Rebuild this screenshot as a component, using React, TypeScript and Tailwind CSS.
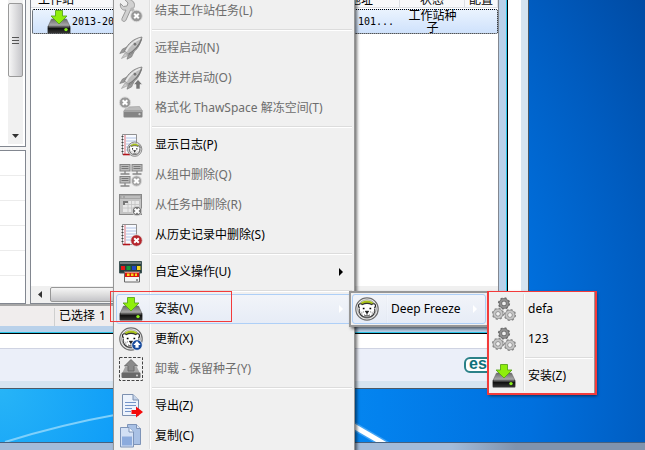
import React from 'react'
import { clsx } from 'clsx'

type IconProps = { muted?: boolean }

function Drive({ muted }: IconProps) {
  return (
    <svg viewBox="0 0 24 24" className="size-6">
      <defs>
        <linearGradient id="driveTop" x1="0" y1="0" x2="0" y2="1">
          <stop offset="0" stopColor="#6b6b6b" />
          <stop offset="1" stopColor="#b5b5b5" />
        </linearGradient>
        <linearGradient id="driveFront" x1="0" y1="0" x2="0" y2="1">
          <stop offset="0" stopColor="#555" />
          <stop offset="0.35" stopColor="#111" />
          <stop offset="1" stopColor="#3a3a3a" />
        </linearGradient>
      </defs>
      <path d="M4.500 9h15L23 16.500H1z" fill="url(#driveTop)" stroke="#666" strokeWidth="0.6" />
      <rect x="0.6" y="15.800" width="22.800" height="7.800" rx="1.200" fill="url(#driveFront)" />
      <path d="M2 16.800h20" stroke="#888" strokeWidth="0.7" />
      <circle cx="19" cy="19.600" r="1.700" fill={muted ? '#aaa' : '#8bf01c'} />
      <path d="M8.500.5h7v5.500h4.500L12 14 4 6h4.500z" fill={muted ? '#888' : '#8fee0c'} stroke={muted ? '#666' : '#5aa51b'} strokeWidth="0.9" />
    </svg>
  )
}

function CrossBadge({ x, y, fill, r = 5.2 }: { x: number; y: number; fill: string; r?: number }) {
  return (
    <g transform={`translate(${x} ${y})`}>
      <circle r={r} fill={fill} stroke="#ddd" strokeWidth="0.9" />
      <path d="m-2.300-2.300 4.600 4.600m0-4.600-4.600 4.600" stroke="#fff" strokeWidth="2" />
    </g>
  )
}

function Wrench() {
  return (
    <svg viewBox="0 0 24 24" className="size-6">
      <path d="M6 .8 9 4 8 7 4.500 7.500 1.500 4.500c-1 4 2 7.500 5.500 6.500L3 19.500c-1 3 3 4 4 1.500L11.500 11c4-1 5-5 3-8-2-2.500-5-3.500-8.500-2.200z" fill="#d0d0d0" stroke="#999" />
      <path d="m12 9 5 6" stroke="#b5b5b5" strokeWidth="3" />
      <CrossBadge x={17.5} y={17} fill="#989898" r={5.8} />
    </svg>
  )
}

function Rocket({ arrow }: { arrow?: boolean }) {
  return (
    <svg viewBox="0 0 24 24" className="size-6">
      <path d="M9 10.500 3.500 13 .800 17.500l5-1.500zM15 16l-2.500 5-4.500 2.200 1.500-5.200z" fill="#999" stroke="#777" strokeWidth="0.6" />
      <path d="M6 17 2.500 22.500 9 19.500z" fill="#c9c9c9" stroke="#999" strokeWidth="0.6" />
      <path d="M23 1C15 2.500 9 7 5.500 15l4 4C17 16 21.500 9 23 1z" fill="#bcbcbc" stroke="#828282" strokeWidth="0.9" />
      <path d="M21.500 2.500C15 5 10 9.500 7 15.500" stroke="#e8e8e8" strokeWidth="1.800" fill="none" />
      <path d="M22.500 3C20 10 15 15 9.500 18" stroke="#777" strokeWidth="1.200" fill="none" />
      <circle cx="16" cy="8.200" r="1.900" fill="#777" stroke="#e0e0e0" strokeWidth="0.6" />
      {arrow && <path d="m19 13.500 4.300 5h-2.300v4.500h-4V18.500h-2.300z" fill="#757575" stroke="#efefef" strokeWidth="0.6" />}
    </svg>
  )
}

function FormatDrive() {
  return (
    <svg viewBox="0 0 24 24" className="size-6">
      <path d="m7.500 11 13-.5 3 4.500H5z" fill="#bbb" stroke="#999" strokeWidth="0.6" />
      <rect x="4.500" y="14.500" width="19" height="7" rx="1" fill="#858585" />
      <path d="M5 15.200h18" stroke="#b5b5b5" />
      <circle cx="20.500" cy="18.200" r="1.100" fill="#ccc" />
      <CrossBadge x={6} y={6.5} fill="#999" r={5.6} />
    </svg>
  )
}

function Notebook({ children }: { children?: React.ReactNode }) {
  return (
    <svg viewBox="0 0 24 24" className="size-6">
      <path d="M3.500 1.500h14v20h-14z" fill="#f8faff" stroke="#777" strokeWidth="0.8" />
      <path d="M7 5h10M7 8h10M7 11h10M7 14h10M7 17h10" stroke="#a9bde0" strokeWidth="0.9" />
      <path d="M6 2v19" stroke="#c3151b" strokeWidth="0.6" />
      <path d="M2.500 3.500h2m-2 3h2m-2 3h2m-2 3h2m-2 3h2m-2 3h2" stroke="#444" />
      <path d="M4 21.500h7" stroke="#b0141a" strokeWidth="1.600" />
      {children}
    </svg>
  )
}

function BearFace() {
  return (
    <>
      <circle cx="12" cy="12" r="11.200" fill="#f1f1f1" stroke="#6d6d6d" strokeWidth="1.200" />
      <circle cx="12" cy="12" r="9.300" fill="#fff" stroke="#8a8a8a" strokeWidth="0.8" />
      <path d="M5.500 6C8.500 2.500 15.500 2.500 18.500 6L17 8H7z" fill="#a9c31a" />
      <circle cx="5.500" cy="8.800" r="2" fill="#fff" stroke="#222" strokeWidth="1.100" />
      <circle cx="18.500" cy="8.800" r="2" fill="#fff" stroke="#222" strokeWidth="1.100" />
      <ellipse cx="12" cy="13.200" rx="7.800" ry="7" fill="#fff" />
      <path d="M7 7.800c3-1.700 7-1.700 10 0M4.300 11.500c-1 4.500 2 8.800 7.700 8.800s8.700-4.300 7.700-8.800" fill="none" stroke="#333" strokeWidth="1.100" />
      <path d="M7.800 11.500h1.700m5 0h1.700" stroke="#000" strokeWidth="1.700" />
      <path d="M10.200 14.200h3.600L12 16.500z" fill="#000" stroke="#000" strokeWidth="0.6" />
      <path d="M12 16v1.800m-3 0c1.200 1.400 4.800 1.400 6 0" fill="none" stroke="#333" strokeWidth="0.9" />
      <path d="m5.800 14.500 1.500 3m11-3-1.500 3M8.500 14l-.5 2m7.500-2 .5 2" stroke="#999" strokeWidth="0.8" />
    </>
  )
}

function Bear({ update }: { update?: boolean }) {
  return (
    <svg viewBox="0 0 24 24" className="size-6">
      <BearFace />
      {update && (
        <>
          <circle cx="18" cy="18" r="5.300" fill="#174a9b" stroke="#fff" strokeWidth="0.7" />
          <path d="m18 14 3.600 4h-2v2.800h-3.200V18h-2z" fill="#fff" />
        </>
      )}
    </svg>
  )
}

function LogBook() {
  return (
    <Notebook>
      <g transform="translate(8 8.500) scale(.64)">
        <BearFace />
      </g>
    </Notebook>
  )
}

function DeletedBook() {
  return (
    <Notebook>
      <CrossBadge x={17.5} y={17.5} fill="#b5242b" r={5.8} />
    </Notebook>
  )
}

function Monitors() {
  return (
    <svg viewBox="0 0 24 24" className="size-6">
      {[[0.5, 1], [12.5, 1], [0.5, 13]].map(([x, y]) => (
        <g key={`${x}-${y}`} transform={`translate(${x} ${y})`}>
          <rect x="0.500" y="0.500" width="10" height="6.500" fill="#bbb" stroke="#858585" />
          <path d="M2 2.500h7M2 4.500h7" stroke="#777" />
          <path d="M5.500 7v3M1 10h9" stroke="#858585" strokeWidth="1.300" />
        </g>
      ))}
      <CrossBadge x={17.5} y={18} fill="#a2a2a2" />
    </svg>
  )
}

function Calendar() {
  return (
    <svg viewBox="0 0 24 24" className="size-6">
      <rect x="0.500" y="1.500" width="22" height="20" fill="#c4c4c4" stroke="#888" />
      <path d="M1 2h21v4H1z" fill="#a5a5a5" />
      <path d="M2.500 4h1.500m2 0h15" stroke="#e2e2e2" strokeWidth="0.8" />
      <path d="M4 8h16v11H4z" fill="#e8e8e8" />
      <path d="M9 8v11m3.500-11v11M16 8v11M4 11.500h16M4 15h16" stroke="#c2c2c2" strokeWidth="0.8" />
      <path d="M4 8h5v2H6v2H4z" fill="#777" />
      <CrossBadge x={18} y={18} fill="#777" r={4.8} />
    </svg>
  )
}

function Actions() {
  return (
    <svg viewBox="0 0 24 24" className="size-6">
      <path d="M.5 1.500h22V13H.5z" fill="#263e3e" stroke="#3f5555" />
      <path d="M1 2h21v2H1z" fill="#718080" />
      <path d="M2 6h4v4H2z" fill="#e51919" />
      <path d="M7.500 6h4v4h-4z" fill="#169b3c" />
      <path d="M13 6h4v4h-4z" fill="#2148c4" />
      <path d="M18 6h3.500v4H18z" fill="#f6d722" />
      <path d="M5.500 11.500h15v10.500h-15z" fill="#f4f4f4" stroke="#666" />
      <path d="M6 12.500h14v4.500H6z" fill="#d9180f" />
      <path d="M8 14.800h10" stroke="#f4d91d" strokeWidth="2.500" strokeDasharray="2.500 1.500" />
      <path d="M17 20h2" stroke="#333" />
    </svg>
  )
}

function Uninstall() {
  return (
    <svg viewBox="0 0 24 24" className="size-6">
      <rect x="0.500" y="0.500" width="23" height="23" fill="none" stroke="#444" strokeDasharray="3 1.500" />
      <path d="M6 10h12l3 6.500H3z" fill="#a5a5a5" />
      <rect x="2.500" y="15.500" width="19" height="5.500" rx="1" fill="#686868" />
      <circle cx="18" cy="18.500" r="1.100" fill="#ccc" />
      <path d="m12 2.500 6.500 6.500H15v5H9V9H5.500z" fill="#8a8a8a" stroke="#666" strokeWidth="0.9" />
    </svg>
  )
}

function Export() {
  return (
    <svg viewBox="0 0 24 24" className="size-6">
      <path d="M3.500.5H14L19.500 6v15.500h-16z" fill="#edf3fc" stroke="#7c90b0" />
      <path d="M14 .5V6h5.500" fill="#c7d5ea" stroke="#7c90b0" />
      <path d="M6 8.500h11M6 11.500h11M6 14.500h7M6 17.500h6" stroke="#7494c8" strokeWidth="1.200" />
      <path d="M12.500 16H17v-3.500l7 5.500-7 5.500V20h-4.500z" fill="#f30b0b" />
    </svg>
  )
}

function Copy() {
  return (
    <svg viewBox="0 0 24 24" className="size-6">
      <path d="M8.500.5h9L21.500 4.500v16h-13z" fill="#a9c1e5" stroke="#7e94b8" />
      <path d="M17.500.5v4h4" fill="#dfe8f6" stroke="#7e94b8" />
      <path d="M1.500 3.500h8.500L14.500 8v15H1.500z" fill="#d3e0f4" stroke="#7e94b8" />
      <path d="M10 3.500V8h4.500" fill="#f3f7fd" stroke="#7e94b8" />
      <path d="M3 12.500h10v9H3z" fill="#8cabdd" />
    </svg>
  )
}

const gears = [
  { cx: 12, cy: 6.4, rim: '#6d6d6d', body: '#8f8f8f' },
  { cx: 6, cy: 16.8, rim: '#8a8a8a', body: '#c6c6c6' },
  { cx: 18, cy: 18, rim: '#8a8a8a', body: '#c6c6c6' },
]

function Gears() {
  return (
    <svg viewBox="0 0 24 24" className="size-6" fill="none">
      {gears.map(({ cx, cy, rim, body }) => (
        <g key={cx}>
          <circle cx={cx} cy={cy} r="5.100" stroke={rim} strokeWidth="2" strokeDasharray="2 2" />
          <circle cx={cx} cy={cy} r="3.600" stroke={rim} strokeWidth="3.400" />
          <circle cx={cx} cy={cy} r="3.600" stroke={body} strokeWidth="2" />
        </g>
      ))}
    </svg>
  )
}

type Entry = { label: string; icon: React.ReactNode; disabled?: boolean; active?: boolean; submenu?: boolean }

// one array per block, blocks are divided by a separator
const mainMenu: Entry[][] = [
  [{ label: '结束工作站任务(L)', icon: <Wrench />, disabled: true }],
  [
    { label: '远程启动(N)', icon: <Rocket />, disabled: true },
    { label: '推送并启动(O)', icon: <Rocket arrow />, disabled: true },
    { label: '格式化 ThawSpace 解冻空间(T)', icon: <FormatDrive />, disabled: true },
  ],
  [
    { label: '显示日志(P)', icon: <LogBook /> },
    { label: '从组中删除(Q)', icon: <Monitors />, disabled: true },
    { label: '从任务中删除(R)', icon: <Calendar />, disabled: true },
    { label: '从历史记录中删除(S)', icon: <DeletedBook /> },
  ],
  [{ label: '自定义操作(U)', icon: <Actions />, submenu: true }],
  [
    { label: '安装(V)', icon: <Drive />, active: true, submenu: true },
    { label: '更新(X)', icon: <Bear update /> },
    { label: '卸载 - 保留种子(Y)', icon: <Uninstall />, disabled: true },
  ],
  [
    { label: '导出(Z)', icon: <Export /> },
    { label: '复制(C)', icon: <Copy /> },
  ],
]

const productMenu: Entry[][] = [[{ label: 'Deep Freeze', icon: <Bear />, active: true, submenu: true }]]

const installMenu: Entry[][] = [
  [
    { label: 'defa', icon: <Gears /> },
    { label: '123', icon: <Gears /> },
  ],
  [{ label: '安装(Z)', icon: <Drive /> }],
]

function MenuItem({ label, icon, disabled, active, submenu }: Entry) {
  return (
    <button
      role="menuitem"
      disabled={disabled}
      className={clsx(
        'flex h-[30px] w-full items-center rounded-[3px] border pl-[2px] pr-2 text-left whitespace-nowrap',
        active ? 'border-[#aecff7] bg-linear-to-b from-[#f2f5fb]/80 to-[#e4ebf8]/80' : 'border-transparent',
        disabled ? 'text-[#6d6d6d]' : 'text-black'
      )}
    >
      <span className="flex w-9 shrink-0">{icon}</span>
      <span className="flex-1">{label}</span>
      {submenu && (
        <svg viewBox="0 0 4 8" className="h-2 w-1">
          <path d="M0 0l4 4-4 4z" fill={active ? '#fff' : '#000'} />
        </svg>
      )}
    </button>
  )
}

function Menu({ groups, className }: { groups: Entry[][]; className: string }) {
  return (
    <div
      role="menu"
      className={clsx('absolute border-[#979797] bg-[#f0f0f0] shadow-[2px_2px_3px_rgba(0,0,0,0.55)]', className)}
    >
      <div className="absolute inset-y-0.5 left-[35px] w-0.5 border-l border-[#e0e0e0] bg-white" />
      <div className="relative">
        {groups.map((group, i) => (
          <React.Fragment key={i}>
            {i > 0 && (
              <div className="flex h-[7px] items-center pl-9">
                <hr className="h-0.5 flex-1 border-t border-[#dcdcdc] bg-white" />
              </div>
            )}
            {group.map((entry) => (
              <MenuItem key={entry.label} {...entry} />
            ))}
          </React.Fragment>
        ))}
      </div>
    </div>
  )
}

function SideColumn() {
  return (
    <div className="flex w-[26px] flex-col gap-[3px]">
      <div className="flex h-[147px] border-r border-b border-[#828790] bg-white pr-0.5 pb-0.5 pl-2">
        <div className="flex w-4 flex-col items-center bg-[#f1f1f1]">
          <div className="mt-[3px] flex h-[74px] w-[15px] flex-col items-center justify-center gap-0.5 rounded-xs border border-[#9a9a9a] bg-linear-to-r from-[#f6f6f6] to-[#c6c6ca]">
            <i className="h-px w-[7px] bg-[#555]" />
            <i className="h-px w-[7px] bg-[#555]" />
            <i className="h-px w-[7px] bg-[#555]" />
          </div>
          <svg viewBox="0 0 7 4" className="mt-auto mb-1.5 h-1 w-[7px]">
            <path d="M0 0h7L3.500 4z" fill="#333" />
          </svg>
        </div>
      </div>
      <div className="flex flex-1 flex-col border-t border-r border-b border-[#828790] bg-white">
        {[1, 2, 3, 4, 5].map((n) => (
          <div key={n} className="h-[25px] border-b border-[#ececec]" />
        ))}
      </div>
    </div>
  )
}

const listFont = "font-['DejaVu_Sans_Mono','Noto_Sans_CJK_SC',monospace]"

function StationList() {
  return (
    <div className="flex min-w-0 flex-1 flex-col border-b border-l border-r border-[#828790] bg-white">
      <table className="w-full table-fixed border-separate border-spacing-0 text-xs leading-3 text-black">
        <colgroup>
          <col />
          <col className="w-[66px]" />
          <col className="w-[65px]" />
          <col className="w-[33px]" />
        </colgroup>
        <thead>
          <tr>
            {['工作站', 'IP地址', '状态', '配置'].map((title, i) => (
              <th key={title} className="border-r border-b border-[#dcdfe4] bg-[#f7f8fa] p-0 font-normal">
                <div
                  className={clsx(
                    'flex h-[7px] items-end overflow-hidden pb-px whitespace-nowrap',
                    i === 0 && 'pl-[7px]',
                    i === 1 && 'justify-end pr-[26px]',
                    i > 1 && 'justify-center'
                  )}
                >
                  {title}
                </div>
              </th>
            ))}
          </tr>
        </thead>
      </table>
      <div className="ml-px mt-px flex h-[25px] items-center rounded-xs border border-dotted border-black bg-linear-to-b from-[#eaf3fe] to-[#cfe2fc] text-black">
        <div className="flex flex-1 items-center pl-[14px]">
          <Drive />
          <span className={clsx('pl-px text-[10px]', listFont)}>2013-20</span>
        </div>
        <span className={clsx('pr-1.5 text-[10px]', listFont)}>101...</span>
        <span className="mr-8 w-[65px] px-2 text-center text-xs leading-3">工作站种子</span>
      </div>
      <div className="mt-auto flex h-[17px] items-center bg-[#f0f0f0] pl-[7px]">
        <svg viewBox="0 0 4 7" className="h-[7px] w-1">
          <path d="M4 0v7L0 3.500z" fill="#333" />
        </svg>
        <div className="ml-2 h-[15px] w-72 rounded-xs border border-[#979797] bg-linear-to-b from-[#f5f5f5] via-[#dedede] to-[#c4c4c8]" />
      </div>
    </div>
  )
}

function Console() {
  return (
    <section className="mr-[13px] flex h-[334px] flex-col border-r border-b border-black bg-[#b9d1ea]">
      <div className="flex flex-1 flex-col border-r border-b border-[#2cc5e8] pr-[7px] pb-[6px]">
        <div className="flex h-[304px] gap-1 bg-[#f5f5f5]">
          <SideColumn />
          <StationList />
        </div>
        <footer className="flex flex-1 items-stretch border-t-2 border-[#a6a6a6] bg-[#f0eded] pt-0.5 text-xs text-black">
          <div className="w-[55px] border-r border-[#cfcfcf]" />
          <span className="pl-1">已选择</span>
          <span className="pl-1">1</span>
        </footer>
      </div>
    </section>
  )
}

function Wallpaper() {
  return (
    <svg viewBox="0 0 645 450" preserveAspectRatio="none" className="absolute inset-0 size-full">
      <defs>
        <radialGradient id="sky" gradientUnits="userSpaceOnUse" cx="0" cy="390" r="760">
          <stop offset="0" stopColor="#27b4f7" />
          <stop offset="0.16" stopColor="#109ef8" />
          <stop offset="0.5" stopColor="#0382ee" />
          <stop offset="0.7" stopColor="#0070de" />
          <stop offset="0.86" stopColor="#005cc0" />
          <stop offset="1" stopColor="#004aa2" />
        </radialGradient>
      </defs>
      <path d="M0 0h645v450H0z" fill="url(#sky)" />
      <path d="M5 442C40 431 75 422 120 414" fill="none" stroke="#7fd0fb" strokeWidth="2" />
      <path d="M345 421 388 446" stroke="#7cc4fb" strokeWidth="8" opacity="0.5" />
      <path d="M345 421 388 446" stroke="#fff" strokeWidth="5" />
    </svg>
  )
}

export default function App() {
  return (
    <main className="relative flex h-screen flex-col overflow-hidden bg-[#0670d8] font-['Noto_Sans','Noto_Sans_CJK_SC',sans-serif] text-xs">
      <Wallpaper />
      <div className="relative mr-[116px] border-r border-b border-[#4d5a66] bg-[#d6e4f0] pr-[7px] pb-[7px]">
        <div className="bg-white">
          <Console />
          <div className="mt-[14px] flex h-[33px] items-center justify-end border-t border-[#cfd3e2] bg-[#ebeff9] pr-[7px]">
            <span className="h-4 w-[50px] rounded-md border-2 border-[#2b8188] bg-white pl-[3px] font-['Liberation_Sans',sans-serif] text-base leading-[10px] font-bold text-[#11717a]">
              eset
            </span>
          </div>
        </div>
      </div>
      <div className="relative mt-auto h-2 border-t border-[#47617f] bg-linear-to-r from-[#a3bbd9] from-70% to-[#8093ad] to-80%" />

      <Menu groups={mainMenu} className="-top-1 left-[113px] w-[242px] border-x px-0.5" />
      <Menu groups={productMenu} className="top-[291px] left-[349px] w-[140px] border-2 px-px py-px" />
      <Menu groups={installMenu} className="top-[291px] left-[487px] w-[108px] border px-px py-0.5" />
      <div className="pointer-events-none absolute top-[291px] left-[487px] h-[104px] w-[110px] border-2 border-t border-[#f33b3b]" />
      <div className="pointer-events-none absolute top-[291px] left-[110px] h-[31px] w-[122px] border border-[#f33b3b]" />
    </main>
  )
}
